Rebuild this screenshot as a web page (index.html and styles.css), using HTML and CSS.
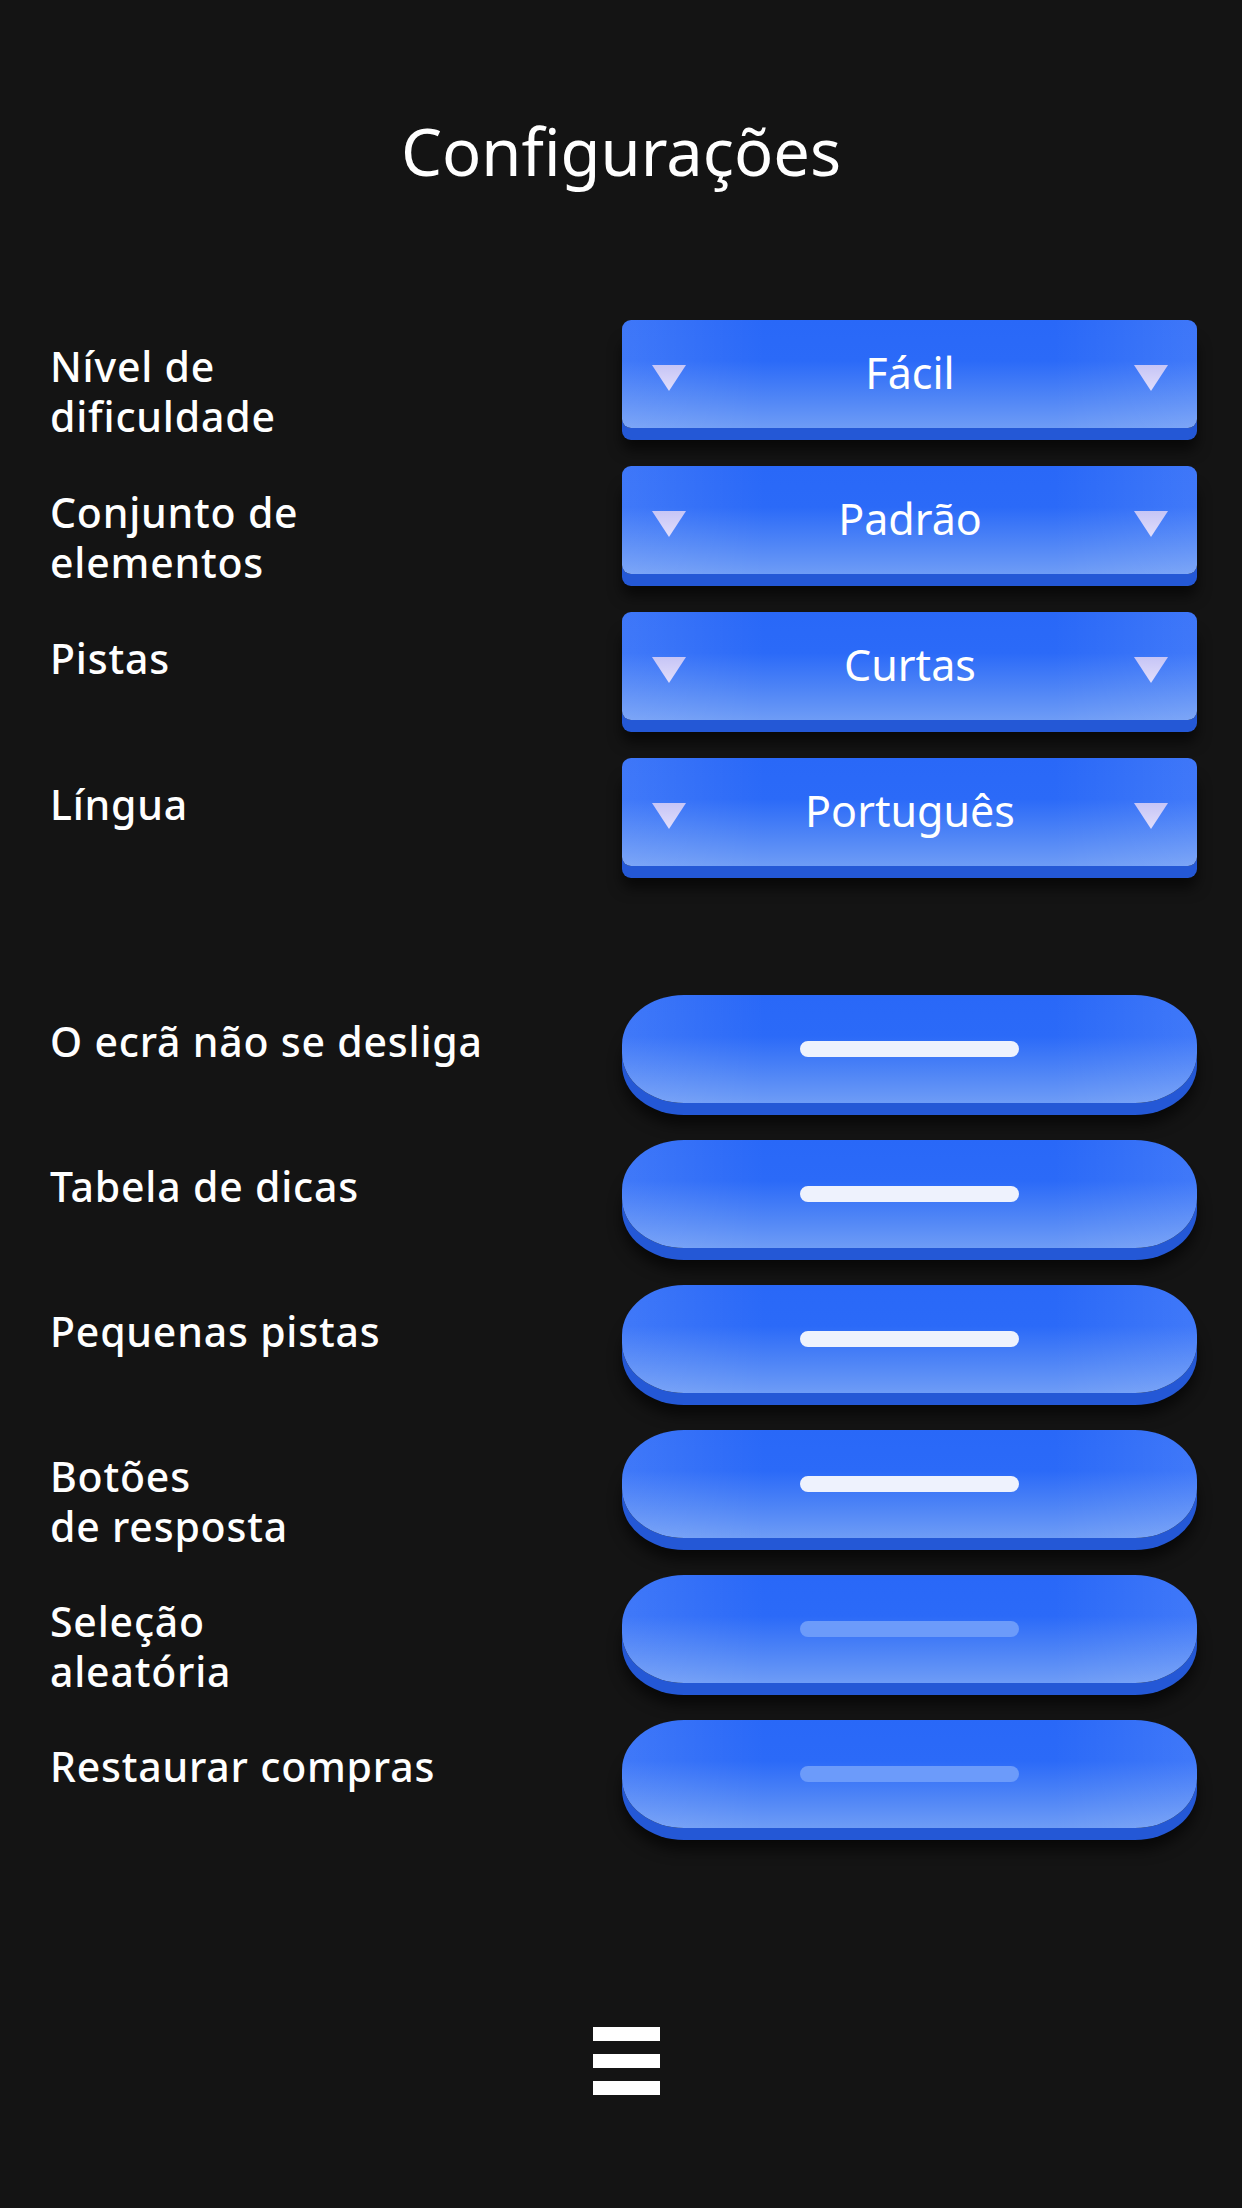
FILE: index.html
```html
<!DOCTYPE html>
<html lang="pt">
<head>
  <meta charset="UTF-8" />
  <title>Configurações</title>
  <link rel="stylesheet" href="styles.css">
</head>
<body>
  <div class="screen">
    <h1 class="title">Configurações</h1>

    <div class="settings selects">
      <div class="row">
        <div class="label">Nível de<br>dificuldade</div>
        <div class="select"><span class="arrow"></span><span class="value">Fácil</span><span class="arrow"></span></div>
      </div>
      <div class="row">
        <div class="label">Conjunto de<br>elementos</div>
        <div class="select"><span class="arrow"></span><span class="value">Padrão</span><span class="arrow"></span></div>
      </div>
      <div class="row">
        <div class="label">Pistas</div>
        <div class="select"><span class="arrow"></span><span class="value">Curtas</span><span class="arrow"></span></div>
      </div>
      <div class="row">
        <div class="label">Língua</div>
        <div class="select"><span class="arrow"></span><span class="value">Português</span><span class="arrow"></span></div>
      </div>
    </div>

    <div class="settings toggles">
      <div class="row">
        <div class="label">O ecrã não se desliga</div>
        <div class="toggle on"><span class="bar"></span></div>
      </div>
      <div class="row">
        <div class="label">Tabela de dicas</div>
        <div class="toggle on"><span class="bar"></span></div>
      </div>
      <div class="row">
        <div class="label">Pequenas pistas</div>
        <div class="toggle on"><span class="bar"></span></div>
      </div>
      <div class="row">
        <div class="label">Botões<br>de resposta</div>
        <div class="toggle on"><span class="bar"></span></div>
      </div>
      <div class="row">
        <div class="label">Seleção<br>aleatória</div>
        <div class="toggle"><span class="bar"></span></div>
      </div>
      <div class="row">
        <div class="label">Restaurar compras</div>
        <div class="toggle"><span class="bar"></span></div>
      </div>
    </div>

    <div class="menu"><span></span><span></span><span></span></div>
  </div>
</body>
</html>
```

FILE: styles.css
```css
html, body { margin: 0; background: #141414; }
body { font-family: "Noto Sans", "Open Sans", sans-serif; color: #fff; }
.screen { width: 1242px; height: 2208px; padding-top: 107px; box-sizing: border-box; display: flex; flex-direction: column; }
.title { margin: 0; font-size: 65px; line-height: 88px; font-weight: 400; text-align: center; }

.settings { display: flex; flex-direction: column; padding: 0 45px 0 50px; }
.selects { margin-top: 125px; gap: 26px; }
.toggles { margin-top: 117px; gap: 25px; }
.row { display: grid; grid-template-columns: 1fr 575px; height: 120px; }
.label { font-size: 41px; line-height: 50px; font-weight: 500; letter-spacing: 0.8px; padding-top: 21px; white-space: nowrap; }

.select, .toggle {
  height: 108px;
  background:
    linear-gradient(to right, rgba(255,255,255,0.1), rgba(255,255,255,0) 25%, rgba(255,255,255,0) 75%, rgba(255,255,255,0.1)),
    linear-gradient(to bottom, #2968f8 0%, #2b6af8 38%, #4f85f6 72%, #6e9cf6 100%);
  box-shadow: 0 12px 0 #2458d6, 0 22px 14px rgba(0,0,0,0.6);
}
.select { border-radius: 9px; display: flex; align-items: center; padding: 0 29px 0 30px; }
.value { flex: 1; text-align: center; font-size: 43px; line-height: 1; padding-bottom: 4px; }
.arrow { width: 34px; height: 26px; margin-top: 8px; clip-path: polygon(0 0, 100% 0, 50% 100%); background: linear-gradient(to bottom, #c6c5f6, #e2defb); }

.toggle { border-radius: 62px / 50px; display: flex; align-items: center; justify-content: center; }
.bar { width: 219px; height: 16px; border-radius: 8px; background: #6c9bfa; }
.toggle.on .bar { background: #eef2fd; }

.menu { margin: 187px 0 0 593px; width: 67px; display: flex; flex-direction: column; gap: 13px; }
.menu span { height: 14px; background: #fff; }
```
